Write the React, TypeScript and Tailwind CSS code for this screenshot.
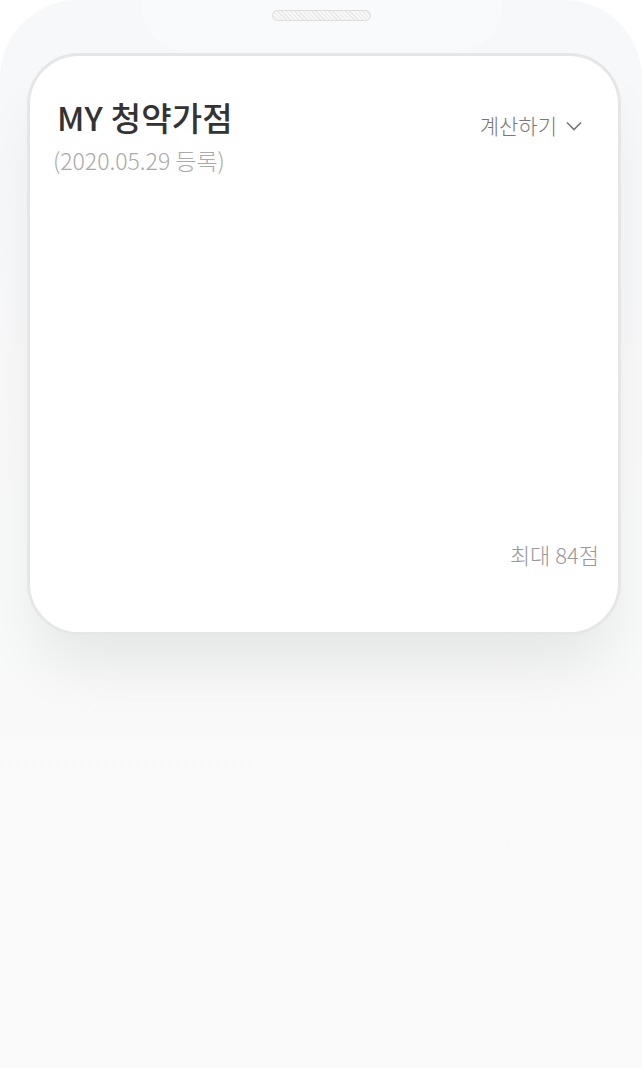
import React from "react";

export default function App() {
  return (
    <div
      className="w-[642px] h-[1068px] overflow-hidden bg-white"
      style={{ fontFamily: '"Noto Sans CJK KR", "Noto Sans", sans-serif' }}
    >
      <div className="flex h-full w-full flex-col rounded-t-[78px] bg-gradient-to-b from-[#f7f8f9] to-[#fafafa]">
        {/* notch */}
        <div className="flex justify-center">
          <div className="flex h-[50px] w-[361px] justify-center rounded-b-[44px] bg-[#f9fafb] pt-[10px]">
            <div className="h-[11px] w-[99px] rounded-full border border-[#dcdcdc] bg-[repeating-linear-gradient(45deg,#e9e9e9_0px,#e9e9e9_1px,#f7f7f7_1px,#f7f7f7_3px)]" />
          </div>
        </div>

        {/* card */}
        <div className="mt-[3px] ml-[27px] flex h-[582px] w-[594px] flex-col rounded-[52px] border-[3px] border-[#e6e6e6] bg-white shadow-[0_40px_60px_-10px_rgba(0,0,0,0.08)]">
          <div className="flex items-start justify-between pl-[26px] pr-[36px] pt-[38px]">
            <div className="flex flex-col">
              <div className="pl-[1px] text-[33px] font-medium leading-[46px] tracking-[0.2px] text-[#333333]">
                MY 청약가점
              </div>
              <div className="mt-[4px] -ml-[3px] text-[23px] font-light leading-[32px] text-[#aaaaaa]">
                (2020.05.29 등록)
              </div>
            </div>
            <div className="mt-[16px] flex items-center gap-[9px] text-[21px] font-light text-[#777777]">
              <span>계산하기</span>
              <svg width="16" height="10" viewBox="0 0 16 10" fill="none">
                <path d="M1 1.5 L8 8.5 L15 1.5" stroke="#777" strokeWidth="1.6" />
              </svg>
            </div>
          </div>
          <div className="mt-auto mb-[61px] flex justify-end pr-[19px] text-[22px] font-light text-[#999999]">
            최대 84점
          </div>
        </div>
      </div>
    </div>
  );
}
